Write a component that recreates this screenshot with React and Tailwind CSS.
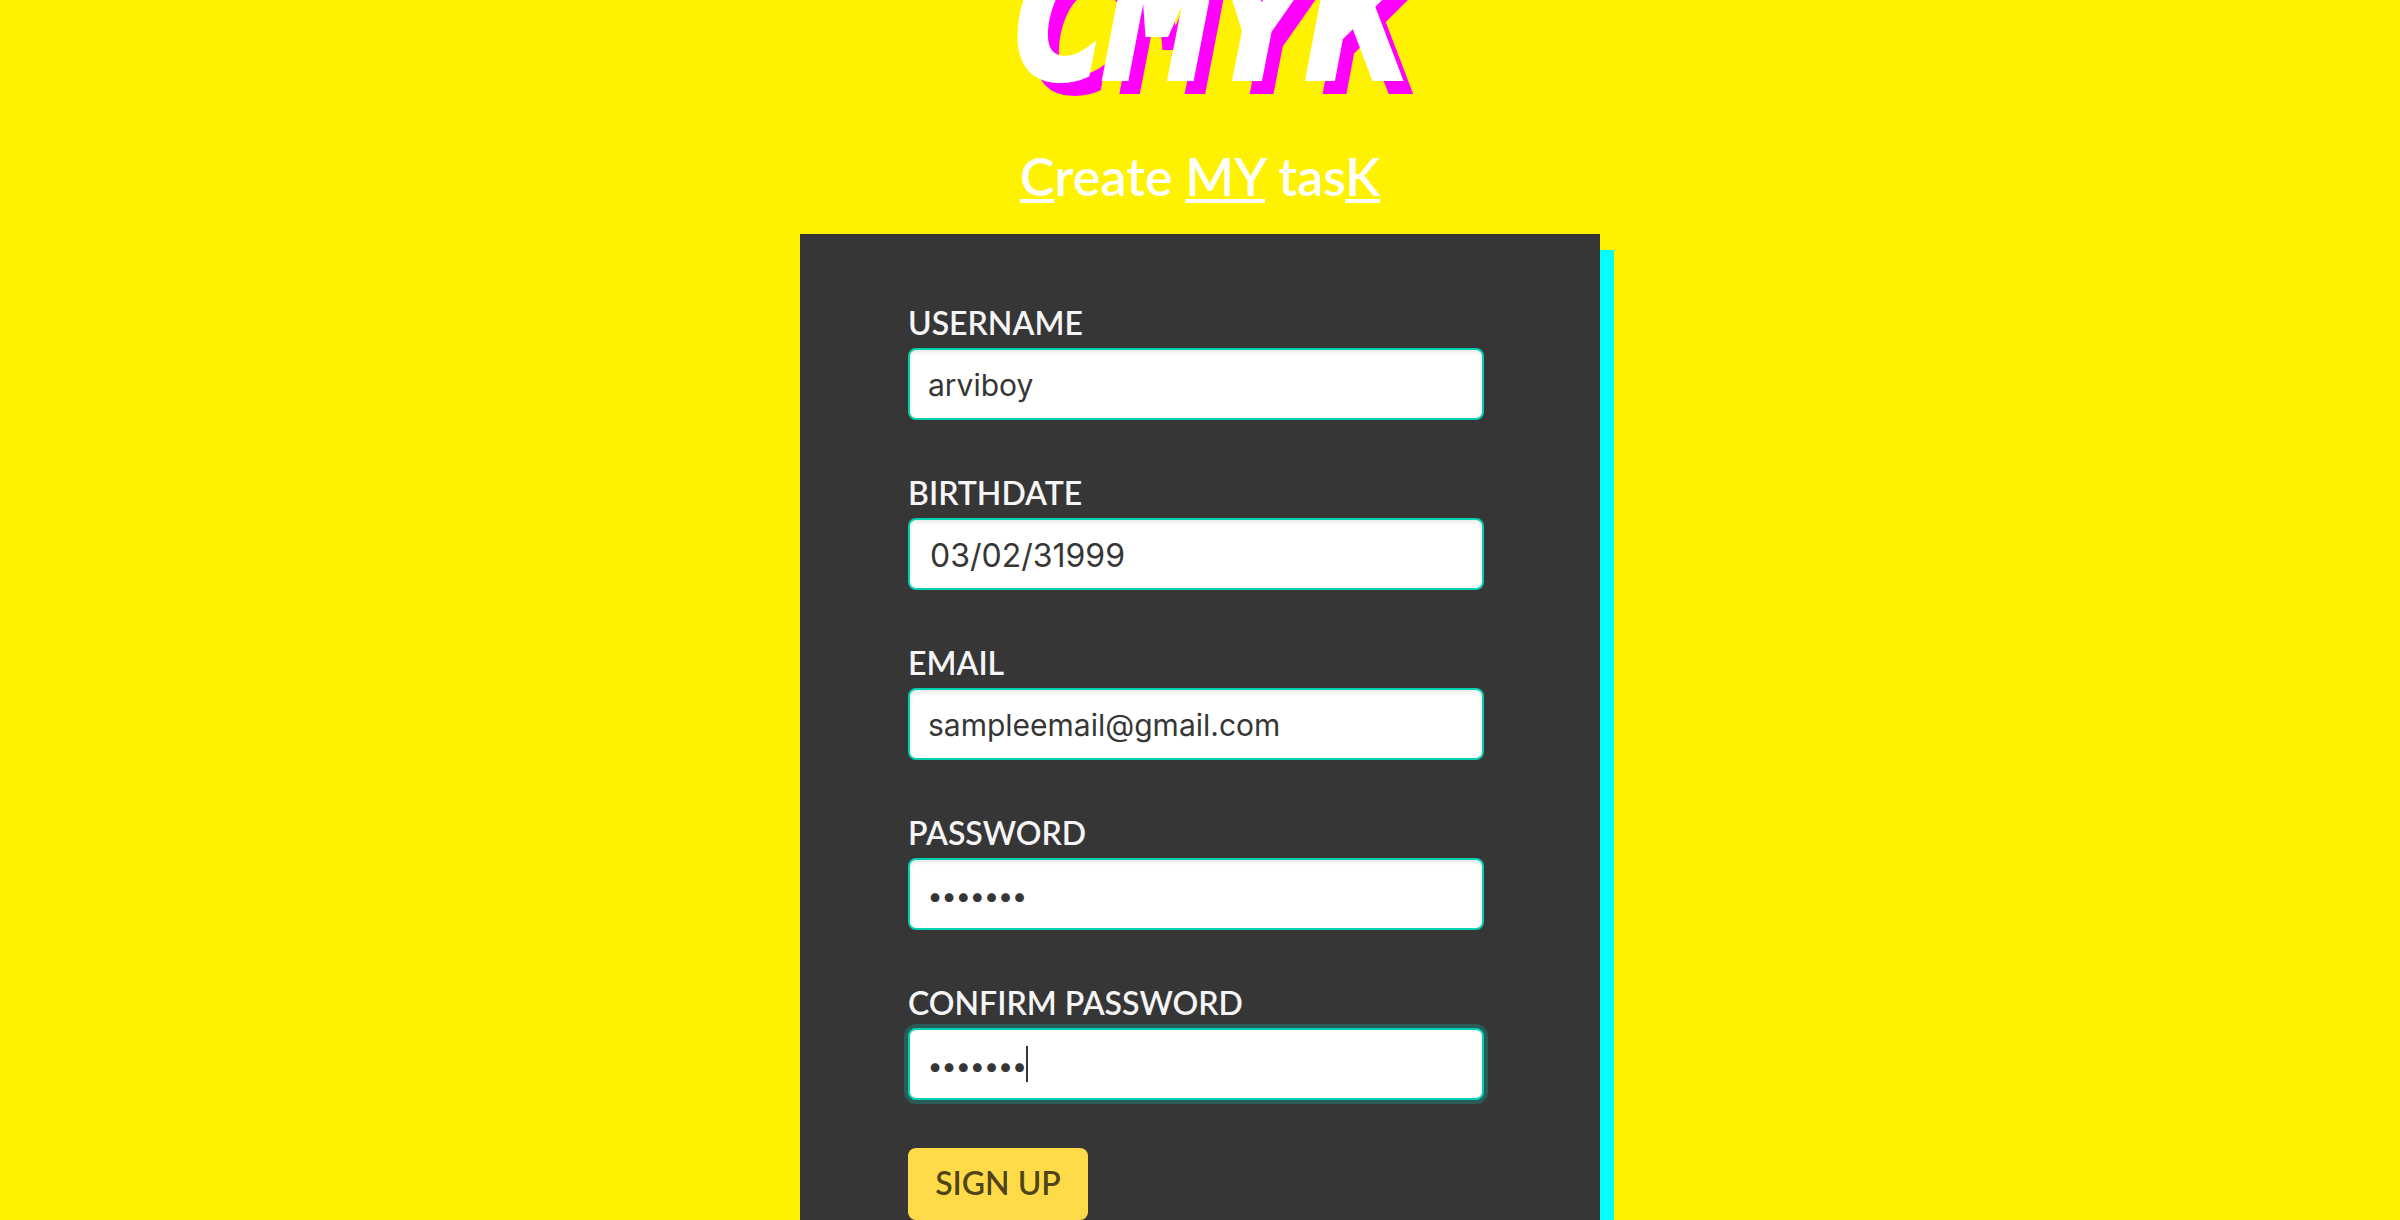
import React from "react";

const inputBase =
  "block h-[72px] w-full rounded-lg border-2 border-[#00d1b2] bg-white font-['Inter',sans-serif] text-[#363636] outline-none";
const resting = "shadow-[inset_0_2px_4px_rgba(10,10,10,0.1)]";
const active = "shadow-[0_0_0_4px_rgba(0,209,178,0.25)]";

function Field({ id, label, type = "text", value, size, state = resting, children }) {
  return (
    <div>
      <label htmlFor={id} className="block text-[32px] leading-[50px] font-semibold text-[#f5f5f5]">
        {label}
      </label>
      <div className="relative">
        <input id={id} name={id} type={type} defaultValue={value} className={`${inputBase} ${size} ${state}`} />
        {children}
      </div>
    </div>
  );
}

export default function App() {
  return (
    <main className="flex h-screen flex-col items-center overflow-hidden bg-[#fff200] font-['Lato',sans-serif]">
      <h1 className="-mt-[62px] shrink-0 pl-5 font-['DejaVu_Sans_Mono',monospace] text-[166px] leading-[166px] font-bold text-white italic [-webkit-text-stroke:6px_white] [text-shadow:14px_16px_0_#ff00ff]">
        CMYK
      </h1>
      <h2 className="mt-10 mb-[26px] shrink-0 text-[52px] leading-16 font-semibold text-white [&_u]:decoration-4 [&_u]:underline-offset-3 [&_u]:[text-decoration-skip-ink:none]">
        <u>C</u>reate <u>MY</u> tas<u>K</u>
      </h2>
      <form className="flex w-1/3 grow flex-col gap-12 bg-[#363636] pt-16 pr-[116px] pl-[108px] shadow-[14px_16px_0_#00ffff]">
        <Field id="username" label="USERNAME" value="arviboy" size="px-[18px] pt-0.5 text-[30px]" />
        <Field id="birthdate" label="BIRTHDATE" value="03/02/31999" size="px-5 pt-0.5 text-[32px]" />
        <Field id="email" label="EMAIL" type="email" value="sampleemail@gmail.com" size="px-[18px] pt-0.5 text-[30px]" />
        <Field id="password" label="PASSWORD" type="password" value="secret7" size="px-[18px] pt-1 text-[28px] font-semibold" />
        <Field
          id="confirm"
          label="CONFIRM PASSWORD"
          type="password"
          value="secret7"
          size="px-[18px] pt-1 text-[28px] font-semibold caret-transparent"
          state={active}
        >
          <span aria-hidden="true" className="absolute top-[18px] left-[118px] h-9 w-0.5 bg-[#363636]" />
        </Field>
        <button
          type="submit"
          className="h-[72px] w-[180px] shrink-0 rounded-lg bg-[#ffdb4a] pb-0.5 text-[32px] font-semibold text-black/70"
        >
          SIGN UP
        </button>
      </form>
    </main>
  );
}
